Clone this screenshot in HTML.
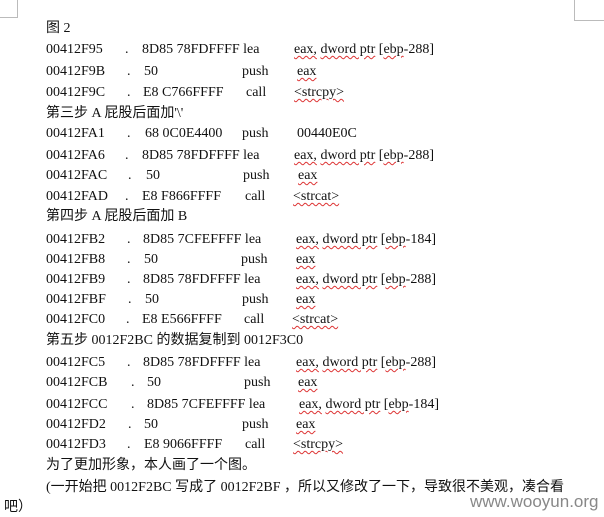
<!DOCTYPE html>
<html><head><meta charset="utf-8"><style>
body{margin:0;width:604px;height:512px;background:#fff;position:relative;overflow:hidden;font-family:"Liberation Serif","Noto Sans CJK SC",serif;font-size:14px;color:#111}
.r{position:absolute;left:0;width:604px;height:18px;line-height:18px;white-space:nowrap}
.r span{position:absolute}
.c{font-family:"Liberation Serif","Noto Sans CJK SC",sans-serif}
u{text-decoration:underline wavy #d33;text-decoration-thickness:1px;text-underline-offset:2px}
</style></head><body>
<div style="position:absolute;left:0;top:17px;width:17px;height:1px;background:#bbb"></div>
<div style="position:absolute;left:17px;top:0;width:1px;height:18px;background:#bbb"></div>
<div style="position:absolute;left:574px;top:0;width:1px;height:21px;background:#bbb"></div>
<div style="position:absolute;left:574px;top:20px;width:30px;height:1px;background:#bbb"></div>

<div class="r c" style="top:20px"><span style="left:46px">图 2</span></div>
<div class="r" style="top:41px"><span style="left:46px">00412F95</span><span style="left:125px">.</span><span style="left:142px">8D85 78FDFFFF lea</span><span style="left:294px"><u>eax,</u> <u>dword ptr</u> [<u>ebp</u>-288]</span></div>
<div class="r" style="top:63px"><span style="left:46px">00412F9B</span><span style="left:127px">.</span><span style="left:144px">50</span><span style="left:242px">push</span><span style="left:297px"><u>eax</u></span></div>
<div class="r" style="top:84px"><span style="left:46px">00412F9C</span><span style="left:127px">.</span><span style="left:143px">E8 C766FFFF</span><span style="left:246px">call</span><span style="left:294px"><u>&lt;strcpy&gt;</u></span></div>
<div class="r c" style="top:105px"><span style="left:46px">第三步 A 屁股后面加'\'</span></div>
<div class="r" style="top:125px"><span style="left:46px">00412FA1</span><span style="left:127px">.</span><span style="left:145px">68 0C0E4400</span><span style="left:242px">push</span><span style="left:297px">00440E0C</span></div>
<div class="r" style="top:147px"><span style="left:46px">00412FA6</span><span style="left:125px">.</span><span style="left:142px">8D85 78FDFFFF lea</span><span style="left:294px"><u>eax,</u> <u>dword ptr</u> [<u>ebp</u>-288]</span></div>
<div class="r" style="top:167px"><span style="left:46px">00412FAC</span><span style="left:128px">.</span><span style="left:146px">50</span><span style="left:243px">push</span><span style="left:298px"><u>eax</u></span></div>
<div class="r" style="top:188px"><span style="left:46px">00412FAD</span><span style="left:125px">.</span><span style="left:142px">E8 F866FFFF</span><span style="left:245px">call</span><span style="left:293px"><u>&lt;strcat&gt;</u></span></div>
<div class="r c" style="top:208px"><span style="left:46px">第四步 A 屁股后面加 B</span></div>
<div class="r" style="top:231px"><span style="left:46px">00412FB2</span><span style="left:127px">.</span><span style="left:143px">8D85 7CFEFFFF lea</span><span style="left:296px"><u>eax,</u> <u>dword ptr</u> [<u>ebp</u>-184]</span></div>
<div class="r" style="top:251px"><span style="left:46px">00412FB8</span><span style="left:127px">.</span><span style="left:144px">50</span><span style="left:241px">push</span><span style="left:296px"><u>eax</u></span></div>
<div class="r" style="top:271px"><span style="left:46px">00412FB9</span><span style="left:127px">.</span><span style="left:143px">8D85 78FDFFFF lea</span><span style="left:296px"><u>eax,</u> <u>dword ptr</u> [<u>ebp</u>-288]</span></div>
<div class="r" style="top:291px"><span style="left:46px">00412FBF</span><span style="left:128px">.</span><span style="left:145px">50</span><span style="left:242px">push</span><span style="left:296px"><u>eax</u></span></div>
<div class="r" style="top:311px"><span style="left:46px">00412FC0</span><span style="left:126px">.</span><span style="left:142px">E8 E566FFFF</span><span style="left:244px">call</span><span style="left:292px"><u>&lt;strcat&gt;</u></span></div>
<div class="r c" style="top:332px"><span style="left:46px">第五步 0012F2BC 的数据复制到 0012F3C0</span></div>
<div class="r" style="top:354px"><span style="left:46px">00412FC5</span><span style="left:127px">.</span><span style="left:143px">8D85 78FDFFFF lea</span><span style="left:296px"><u>eax,</u> <u>dword ptr</u> [<u>ebp</u>-288]</span></div>
<div class="r" style="top:374px"><span style="left:46px">00412FCB</span><span style="left:131px">.</span><span style="left:147px">50</span><span style="left:244px">push</span><span style="left:298px"><u>eax</u></span></div>
<div class="r" style="top:396px"><span style="left:46px">00412FCC</span><span style="left:131px">.</span><span style="left:147px">8D85 7CFEFFFF lea</span><span style="left:299px"><u>eax,</u> <u>dword ptr</u> [<u>ebp</u>-184]</span></div>
<div class="r" style="top:416px"><span style="left:46px">00412FD2</span><span style="left:128px">.</span><span style="left:144px">50</span><span style="left:242px">push</span><span style="left:296px"><u>eax</u></span></div>
<div class="r" style="top:436px"><span style="left:46px">00412FD3</span><span style="left:127px">.</span><span style="left:144px">E8 9066FFFF</span><span style="left:245px">call</span><span style="left:293px"><u>&lt;strcpy&gt;</u></span></div>
<div class="r c" style="top:457px"><span style="left:46px">为了更加形象，本人画了一个图。</span></div>
<div class="r c" style="top:479px"><span style="left:46px">(一开始把 0012F2BC 写成了 0012F2BF ，所以又修改了一下，导致很不美观，凑合看</span></div>
<div class="r c" style="top:499px"><span style="left:4px">吧）</span></div>
<div style="position:absolute;left:470px;top:492px;font-family:'Liberation Sans',sans-serif;font-size:17px;color:#888;line-height:20px">www.wooyun.org</div>
</body></html>
